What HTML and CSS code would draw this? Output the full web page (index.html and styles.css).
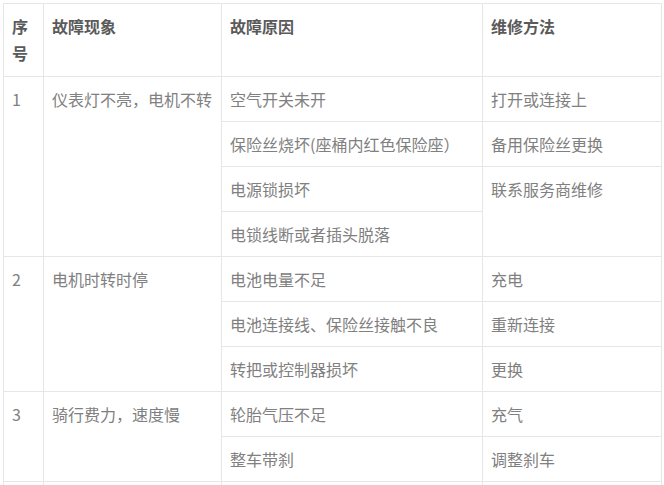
FILE: index.html
```html
<!DOCTYPE html>
<html lang="zh-CN">
<head>
<meta charset="utf-8">
<title>故障排除</title>
<link rel="stylesheet" href="styles.css">
</head>
<body>
<table class="fault-table">
  <colgroup>
    <col class="c-no">
    <col class="c-sym">
    <col class="c-cause">
    <col class="c-fix">
  </colgroup>
  <thead>
    <tr class="head-row">
      <th>序号</th>
      <th>故障现象</th>
      <th>故障原因</th>
      <th>维修方法</th>
    </tr>
  </thead>
  <tbody>
    <tr>
      <td rowspan="4">1</td>
      <td rowspan="4">仪表灯不亮，电机不转</td>
      <td>空气开关未开</td>
      <td>打开或连接上</td>
    </tr>
    <tr>
      <td>保险丝烧坏(座桶内红色保险座）</td>
      <td>备用保险丝更换</td>
    </tr>
    <tr>
      <td>电源锁损坏</td>
      <td rowspan="2">联系服务商维修</td>
    </tr>
    <tr>
      <td>电锁线断或者插头脱落</td>
    </tr>
    <tr>
      <td rowspan="3">2</td>
      <td rowspan="3">电机时转时停</td>
      <td>电池电量不足</td>
      <td>充电</td>
    </tr>
    <tr>
      <td>电池连接线、保险丝接触不良</td>
      <td>重新连接</td>
    </tr>
    <tr>
      <td>转把或控制器损坏</td>
      <td>更换</td>
    </tr>
    <tr>
      <td rowspan="2">3</td>
      <td rowspan="2">骑行费力，速度慢</td>
      <td>轮胎气压不足</td>
      <td>充气</td>
    </tr>
    <tr>
      <td>整车带刹</td>
      <td>调整刹车</td>
    </tr>
    <tr class="cut-row">
      <td></td>
      <td></td>
      <td></td>
      <td></td>
    </tr>
  </tbody>
</table>
</body>
</html>
```

FILE: styles.css
```css
html, body {
  margin: 0;
  padding: 0;
  background: #ffffff;
}

body {
  padding: 3px;
  overflow: hidden;
  font-family: "Noto Sans CJK SC", "Noto Sans", sans-serif;
  font-size: 16px;
  color: #808080;
}

.fault-table {
  border-collapse: collapse;
  table-layout: fixed;
  width: 658px;
}

.c-no { width: 40px; }
.c-sym { width: 178px; }
.c-cause { width: 261px; }
.c-fix { width: 179px; }

.fault-table th,
.fault-table td {
  border: 1px solid #e6e6e6;
  padding: 9px 8px;
  text-align: left;
  vertical-align: top;
  line-height: 26px;
  white-space: nowrap;
}

.fault-table th {
  font-weight: bold;
  color: #5a5a5a;
  line-height: 27px;
  white-space: normal;
}

.cut-row td {
  height: 26px;
}
```
